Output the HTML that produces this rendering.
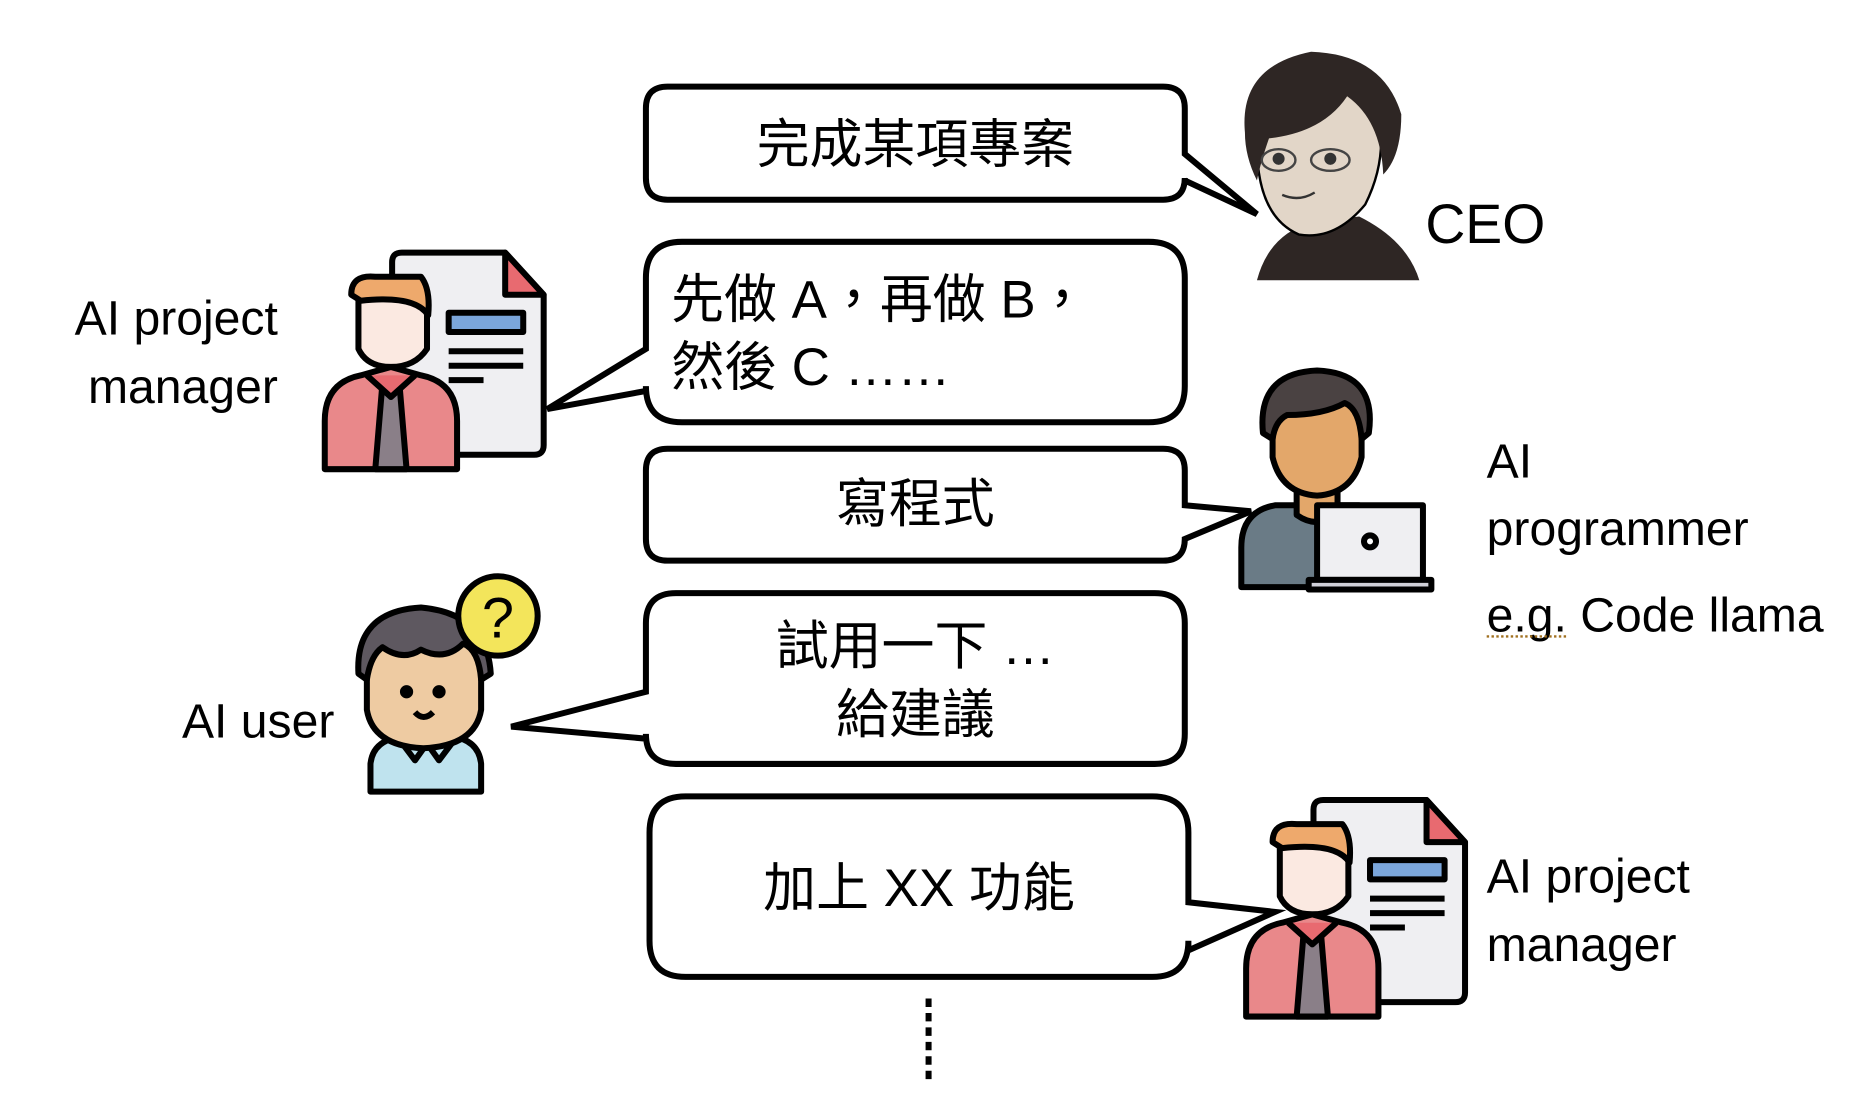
<!DOCTYPE html>
<html><head><meta charset="utf-8"><style>
html,body{margin:0;padding:0;background:#fff;width:1874px;height:1108px;overflow:hidden}
svg{display:block}
text{font-family:"Liberation Sans","Noto Sans CJK TC",sans-serif;fill:#000}
</style></head><body>
<svg width="1874" height="1108" viewBox="0 0 1558 921" preserveAspectRatio="none" xmlns="http://www.w3.org/2000/svg">
<g fill="#fff" stroke="#000" stroke-width="5" stroke-linejoin="miter">
<path d="M555,72 H967 Q985,72 985,90 V128 L1045,178 L985,150 V148 Q985,166 967,166 H555 Q537,166 537,148 V90 Q537,72 555,72 Z"/>
<path d="M567,201 H955 Q985,201 985,231 V321 Q985,351 955,351 H567 Q537,351 537,321 V325 L455,340 L537,290 V231 Q537,201 567,201 Z"/>
<path d="M555,373 H967 Q985,373 985,391 V420 L1040,425 L985,448 V448 Q985,466 967,466 H555 Q537,466 537,448 V391 Q537,373 555,373 Z"/>
<path d="M562,493 H960 Q985,493 985,518 V610 Q985,635 960,635 H562 Q537,635 537,610 V614 L425,604 L537,575 V518 Q537,493 562,493 Z"/>
<path d="M570,662 H958 Q988,662 988,692 V750 L1060,758 L988,790 V782 Q988,812 958,812 H570 Q540,812 540,782 V692 Q540,662 570,662 Z"/>
</g>
<line x1="772" y1="830" x2="772" y2="898" stroke="#000" stroke-width="5" stroke-dasharray="7,5"/>
<g font-size="44">
<text x="761" y="135" text-anchor="middle">完成某項專案</text>
<text x="558" y="264">先做 A，再做 B，</text>
<text x="558" y="320">然後 C ……</text>
<text x="761" y="434" text-anchor="middle">寫程式</text>
<text x="761" y="552" text-anchor="middle">試用一下 …</text>
<text x="761" y="609" text-anchor="middle">給建議</text>
<text x="764" y="753" text-anchor="middle">加上 XX 功能</text>
</g>
<g font-size="40">
<text x="231" y="278" text-anchor="end">AI project</text>
<text x="231" y="335" text-anchor="end">manager</text>
<text x="1185" y="202" font-size="46">CEO</text>
<text x="1236" y="397">AI</text>
<text x="1236" y="453">programmer</text>
<text x="1236" y="525">e.g. Code llama</text>
<text x="278" y="613" text-anchor="end">AI user</text>
<text x="1236" y="742">AI project</text>
<text x="1236" y="799">manager</text>
</g>
<line x1="1236" y1="529" x2="1303" y2="529" stroke="#a07020" stroke-width="2" stroke-dasharray="2,2"/>
<!-- PM icon template -->
<defs>
<g id="pm" stroke="#000" stroke-width="5" stroke-linejoin="round">
<path d="M334,210 H420 L452,245 V370 Q452,378 444,378 H334 Q326,378 326,370 V218 Q326,210 334,210 Z" fill="#efeff2"/>
<path d="M420,210 V245 H452 Z" fill="#e86a70"/>
<rect x="373" y="260" width="62" height="16" fill="#7ba6db"/>
<path d="M373,292 H435 M373,304 H435 M373,316 H402" fill="none"/>
<path d="M270,390 V350 Q270,318 300,312 L325,305 L350,312 Q380,318 380,350 V390 Z" fill="#e9888a"/>
<path d="M318,318 L312,390 H338 L332,318 Z" fill="#8a7f88"/>
<path d="M305,312 L325,330 L345,312" fill="#e86a70"/>
<path d="M298,245 Q295,230 312,232 H345 Q356,235 355,255 L355,290 Q345,305 325,305 Q305,305 298,290 Z" fill="#fbe9e1"/>
<path d="M292,245 Q292,228 312,230 H350 Q358,240 356,262 Q345,245 300,250 Z" fill="#eea96c"/>
</g>
</defs>
<use href="#pm"/>
<use href="#pm" transform="translate(766,455)"/>
<!-- CEO face -->
<path d="M1045,233 Q1055,195 1090,185 L1130,180 Q1170,200 1180,233 Z" fill="#2e2624"/>
<path d="M1045,120 Q1045,180 1080,195 Q1110,200 1135,170 Q1150,140 1148,110 Q1130,70 1090,72 Q1050,80 1045,120 Z" fill="#e2d6c8" stroke="#000" stroke-width="2"/>
<path d="M1035,110 Q1030,55 1090,43 Q1150,45 1165,95 Q1165,130 1150,145 Q1148,100 1120,80 Q1100,110 1055,115 Q1048,135 1045,150 Q1035,130 1035,110 Z" fill="#2e2624"/>
<ellipse cx="1063" cy="133" rx="14" ry="9" fill="none" stroke="#444" stroke-width="2"/>
<ellipse cx="1106" cy="133" rx="16" ry="9" fill="none" stroke="#444" stroke-width="2"/>
<circle cx="1063" cy="132" r="5" fill="#333"/><circle cx="1106" cy="132" r="5" fill="#333"/>
<path d="M1066,162 Q1080,168 1093,160" fill="none" stroke="#333" stroke-width="2"/>
<!-- Programmer -->
<g stroke="#000" stroke-width="5" stroke-linejoin="round">
<path d="M1032,488 V455 Q1032,425 1060,420 H1130 Q1155,425 1160,455 V488 Z" fill="#6a7b86"/>
<path d="M1078,395 V428 Q1095,440 1112,428 V395 Z" fill="#e3a76a"/>
<path d="M1058,350 Q1058,320 1095,318 Q1132,320 1132,350 V380 Q1125,410 1095,412 Q1065,410 1058,380 Z" fill="#e3a76a"/>
<path d="M1050,360 Q1045,310 1095,308 Q1145,310 1138,360 L1132,365 Q1130,340 1118,335 Q1100,345 1070,345 Q1060,350 1058,365 Z" fill="#4a4242"/>
<rect x="1095" y="420" width="88" height="62" fill="#efeff2"/>
<circle cx="1139" cy="450" r="5" fill="#fff"/>
<path d="M1088,482 H1190 V490 H1088 Z" fill="#d0d0d8"/>
</g>
<!-- AI user -->
<g stroke="#000" stroke-width="5" stroke-linejoin="round">
<path d="M308,658 V635 Q310,615 335,612 H375 Q398,615 400,635 V658 Z" fill="#bfe3ee"/>
<path d="M330,612 L345,632 L355,618 L365,632 L380,612" fill="none"/>
<path d="M305,555 Q305,525 352,522 Q400,525 400,555 V590 Q395,620 352,622 Q310,620 305,590 Z" fill="#eecba2"/>
<path d="M298,560 Q295,508 350,505 Q405,510 408,560 L400,565 Q398,540 385,535 Q370,550 350,540 Q335,550 318,538 Q308,545 305,565 Z" fill="#5e5860"/>
<circle cx="338" cy="575" r="3" fill="#000"/><circle cx="365" cy="575" r="3" fill="#000"/>
<path d="M345,592 Q352,600 360,592" fill="none"/>
<circle cx="414" cy="512" r="33" fill="#f3e55b"/>
</g>
<text x="414" y="530" font-size="48" text-anchor="middle">?</text>
</svg>
</body></html>
